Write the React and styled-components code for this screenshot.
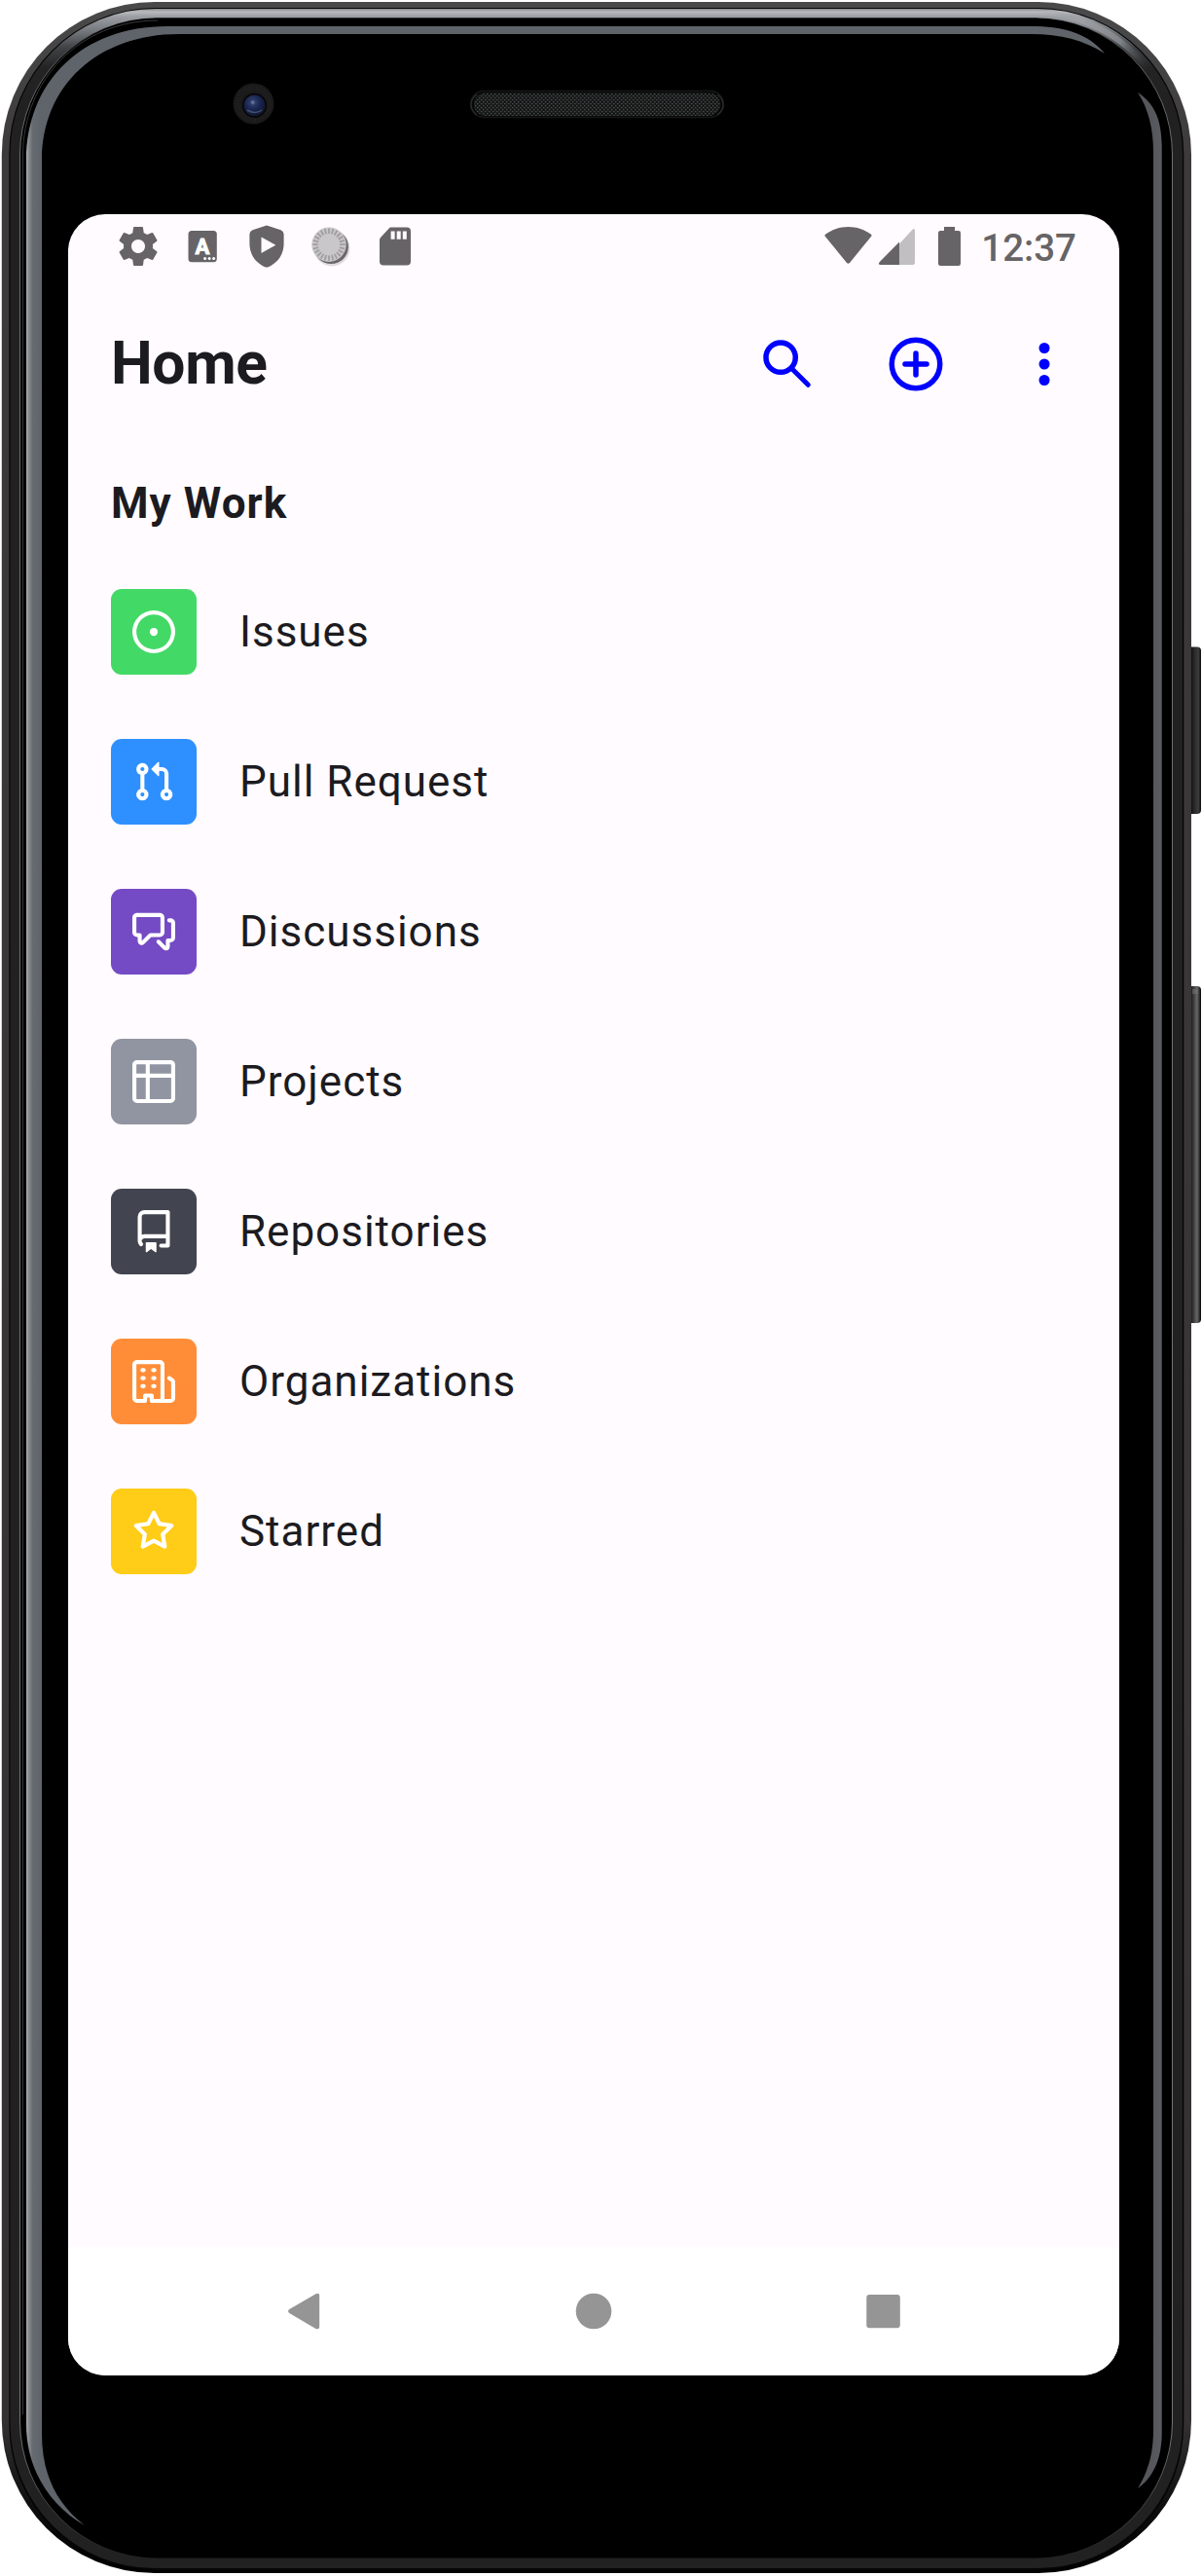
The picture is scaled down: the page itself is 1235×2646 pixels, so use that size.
import React from "react";
import styled, { createGlobalStyle } from "styled-components";

const GlobalStyle = createGlobalStyle`
  html, body { margin: 0; padding: 0; background: #ffffff; }
  * { box-sizing: border-box; }
`;

const Device = styled.div`
  position: relative;
  width: 1235px;
  height: 2646px;
  padding: 220px 85px 206px 70px;
  overflow: hidden;
  font-family: Roboto, "Liberation Sans", sans-serif;
`;

const Artwork = styled.svg`
  position: absolute;
  inset: 0;
  width: 1235px;
  height: 2646px;
`;

const Screen = styled.div`
  position: relative;
  display: flex;
  flex-direction: column;
  width: 1080px;
  height: 2220px;
  border-radius: 38px;
  overflow: hidden;
  background: #fffbff;
  color: #1c1b1f;
`;

const StatusBar = styled.div`
  display: flex;
  align-items: center;
  justify-content: space-between;
  height: 66px;
  padding: 0 44px 0 39px;
`;

const StatusGroup = styled.div`
  display: flex;
  align-items: center;
  height: 66px;
`;

const StatusIcon = styled.svg`
  display: block;
  width: ${(p) => p.$width || 66}px;
  height: 66px;
  fill: #666466;
`;

const Clock = styled.time`
  font-size: 38.5px;
  line-height: 66px;
  font-weight: 500;
  color: #666466;
  padding-top: 4px;
`;

const AppBar = styled.header`
  display: flex;
  align-items: center;
  justify-content: space-between;
  height: 176px;
  padding: 0 44px;
`;

const Title = styled.h1`
  margin: 0 0 2px;
  font-size: 60.5px;
  line-height: 77px;
  font-weight: 700;
  letter-spacing: -0.35px;
`;

const Actions = styled.div`
  display: flex;
  gap: 66px;
`;

const ActionIcon = styled.svg`
  display: block;
  width: 66px;
  height: 66px;
  fill: none;
  stroke: #0000ff;
  stroke-width: 2;
  stroke-linecap: round;
`;

const Content = styled.main`
  flex: 1;
  padding: 22px 44px 0;
`;

const SectionTitle = styled.h2`
  margin: 0;
  font-size: 44px;
  line-height: 66px;
  font-weight: 700;
  letter-spacing: 1.05px;
`;

const WorkList = styled.ul`
  display: flex;
  flex-direction: column;
  gap: 66px;
  margin: 55px 0 0;
  padding: 0;
  list-style: none;
`;

const WorkItem = styled.li`
  display: flex;
  align-items: center;
  gap: 44px;
  height: 88px;
`;

const Tile = styled.span`
  display: flex;
  align-items: center;
  justify-content: center;
  width: 88px;
  height: 88px;
  border-radius: 11px;
  background: ${(p) => p.$color};
`;

const TileIcon = styled.svg`
  width: 44px;
  height: 44px;
  fill: #ffffff;
`;

const Label = styled.span`
  font-size: 44px;
  line-height: 66px;
  letter-spacing: 0.99px;
`;

const NavBar = styled.nav`
  display: flex;
  align-items: center;
  justify-content: center;
  gap: 232px;
  height: 132px;
  background: #ffffff;
`;

const NavIcon = styled.svg`
  width: 66px;
  height: 66px;
  fill: #959595;
`;

const items = [
  {
    label: "Issues",
    color: "#43d966",
    d: "M8 9.5a1.5 1.5 0 1 0 0-3 1.5 1.5 0 0 0 0 3ZM8 0a8 8 0 1 1 0 16A8 8 0 0 1 8 0ZM1.5 8a6.5 6.5 0 1 0 13 0 6.5 6.5 0 0 0-13 0Z",
  },
  {
    label: "Pull Request",
    color: "#2e90ff",
    d: "M1.5 3.25a2.25 2.25 0 1 1 3 2.122v5.256a2.251 2.251 0 1 1-1.5 0V5.372A2.25 2.25 0 0 1 1.5 3.25Zm5.677-.177L9.573.677A.25.25 0 0 1 10 .854V2.5h1A2.5 2.5 0 0 1 13.5 5v5.628a2.251 2.251 0 1 1-1.5 0V5a1 1 0 0 0-1-1h-1v1.646a.25.25 0 0 1-.427.177L7.177 3.427a.25.25 0 0 1 0-.354ZM3.75 2.5a.75.75 0 1 0 0 1.5.75.75 0 0 0 0-1.5Zm0 9.5a.75.75 0 1 0 0 1.5.75.75 0 0 0 0-1.5Zm8.25.75a.75.75 0 1 0 1.5 0 .75.75 0 0 0-1.5 0Z",
  },
  {
    label: "Discussions",
    color: "#754ac5",
    d: "M1.75 1h8.5c.966 0 1.75.784 1.75 1.75v5.5A1.75 1.75 0 0 1 10.25 10H7.061l-2.574 2.573A1.458 1.458 0 0 1 2 11.543V10h-.25A1.75 1.75 0 0 1 0 8.25v-5.5C0 1.784.784 1 1.75 1ZM1.5 2.75v5.5c0 .138.112.25.25.25h1a.75.75 0 0 1 .75.75v2.19l2.72-2.72a.749.749 0 0 1 .53-.22h3.5a.25.25 0 0 0 .25-.25v-5.5a.25.25 0 0 0-.25-.25h-8.5a.25.25 0 0 0-.25.25Zm13 2a.25.25 0 0 0-.25-.25h-.5a.75.75 0 0 1 0-1.5h.5c.966 0 1.75.784 1.75 1.75v5.5A1.75 1.75 0 0 1 14.25 12H14v1.543a1.458 1.458 0 0 1-2.487 1.03L9.22 12.28a.749.749 0 0 1 .326-1.275.749.749 0 0 1 .734.215l2.22 2.22v-2.19a.75.75 0 0 1 .75-.75h1a.25.25 0 0 0 .25-.25Z",
  },
  {
    label: "Projects",
    color: "#9195a1",
    d: "M0 1.75C0 .784.784 0 1.75 0h12.5C15.216 0 16 .784 16 1.75v12.5A1.75 1.75 0 0 1 14.25 16H1.75A1.75 1.75 0 0 1 0 14.25ZM6.5 6.5v8h7.75a.25.25 0 0 0 .25-.25V6.5Zm8-1.5V1.75a.25.25 0 0 0-.25-.25H6.5V5Zm-13 1.5v7.75c0 .138.112.25.25.25H5v-8ZM5 5V1.5H1.75a.25.25 0 0 0-.25.25V5Z",
  },
  {
    label: "Repositories",
    color: "#42444f",
    d: "M2 2.5A2.5 2.5 0 0 1 4.5 0h8.75a.75.75 0 0 1 .75.75v12.5a.75.75 0 0 1-.75.75h-2.5a.75.75 0 0 1 0-1.5h1.75v-2h-8a1 1 0 0 0-.714 1.7.75.75 0 1 1-1.072 1.05A2.495 2.495 0 0 1 2 11.5Zm10.5-1h-8a1 1 0 0 0-1 1v6.708A2.486 2.486 0 0 1 4.5 9h8ZM5 12.25a.25.25 0 0 1 .25-.25h3.5a.25.25 0 0 1 .25.25v3.25a.25.25 0 0 1-.4.2l-1.45-1.087a.249.249 0 0 0-.3 0L5.4 15.7a.25.25 0 0 1-.4-.2Z",
  },
  {
    label: "Organizations",
    color: "#ff8d38",
    d: "M1.75 16A1.75 1.75 0 0 1 0 14.25V1.75C0 .784.784 0 1.75 0h8.5C11.216 0 12 .784 12 1.75v12.5c0 .085-.006.168-.018.25h2.268a.25.25 0 0 0 .25-.25V8.285a.25.25 0 0 0-.111-.208l-1.055-.703a.749.749 0 1 1 .832-1.248l1.055.703c.487.325.779.871.779 1.456v5.965A1.75 1.75 0 0 1 14.25 16h-3.5a.766.766 0 0 1-.197-.026c-.099.017-.2.026-.303.026h-3a.75.75 0 0 1-.75-.75V14h-1v1.25a.75.75 0 0 1-.75.75Zm-.25-1.75c0 .138.112.25.25.25H4v-1.25a.75.75 0 0 1 .75-.75h2.5a.75.75 0 0 1 .75.75v1.25h2.25a.25.25 0 0 0 .25-.25V1.75a.25.25 0 0 0-.25-.25h-8.5a.25.25 0 0 0-.25.25ZM3.75 6h.5a.75.75 0 0 1 0 1.5h-.5a.75.75 0 0 1 0-1.5ZM3 3.75A.75.75 0 0 1 3.75 3h.5a.75.75 0 0 1 0 1.5h-.5A.75.75 0 0 1 3 3.75Zm4 3A.75.75 0 0 1 7.75 6h.5a.75.75 0 0 1 0 1.5h-.5A.75.75 0 0 1 7 6.75ZM7.75 3h.5a.75.75 0 0 1 0 1.5h-.5a.75.75 0 0 1 0-1.5ZM3 9.75A.75.75 0 0 1 3.75 9h.5a.75.75 0 0 1 0 1.5h-.5A.75.75 0 0 1 3 9.75ZM7.75 9h.5a.75.75 0 0 1 0 1.5h-.5a.75.75 0 0 1 0-1.5Z",
  },
  {
    label: "Starred",
    color: "#ffcc17",
    d: "M8 .25a.75.75 0 0 1 .673.418l1.882 3.815 4.21.612a.75.75 0 0 1 .416 1.279l-3.046 2.97.719 4.192a.751.751 0 0 1-1.088.791L8 12.347l-3.766 1.98a.75.75 0 0 1-1.088-.79l.72-4.194L.818 6.374a.75.75 0 0 1 .416-1.28l4.21-.611L7.327.668A.75.75 0 0 1 8 .25Zm0 2.445L6.615 5.5a.75.75 0 0 1-.564.41l-3.097.45 2.24 2.184a.75.75 0 0 1 .216.664l-.528 3.084 2.769-1.456a.75.75 0 0 1 .698 0l2.77 1.456-.53-3.084a.75.75 0 0 1 .216-.664l2.24-2.183-3.096-.45a.75.75 0 0 1-.564-.41L8 2.694Z",
  },
];

const gearPath =
  "M19.43 12.98c.04-.32.07-.64.07-.98s-.03-.66-.07-.98l2.11-1.65c.19-.15.24-.42.12-.64l-2-3.46c-.12-.22-.39-.3-.61-.22l-2.49 1c-.52-.4-1.08-.73-1.69-.98l-.38-2.65C14.46 2.18 14.25 2 14 2h-4c-.25 0-.46.18-.49.42l-.38 2.65c-.61.25-1.17.59-1.69.98l-2.49-1c-.23-.09-.49 0-.61.22l-2 3.46c-.13.22-.07.49.12.64l2.11 1.65c-.04.32-.07.65-.07.98s.03.66.07.98l-2.11 1.65c-.19.15-.24.42-.12.64l2 3.46c.12.22.39.3.61.22l2.49-1c.52.4 1.08.73 1.69.98l.38 2.65c.03.24.24.42.49.42h4c.25 0 .46-.18.49-.42l.38-2.65c.61-.25 1.17-.59 1.69-.98l2.49 1c.23.09.49 0 .61-.22l2-3.46c.12-.22.07-.49-.12-.64l-2.11-1.65zM12 15.5c-1.93 0-3.5-1.57-3.5-3.5s1.57-3.5 3.5-3.5 3.5 1.57 3.5 3.5-1.57 3.5-3.5 3.5z";

function DeviceArtwork() {
  return (
    <Artwork viewBox="0 0 1235 2646" aria-hidden="true">
      <defs>
        <linearGradient id="shell" gradientUnits="userSpaceOnUse" x1="0" y1="0" x2="0" y2="2646">
          <stop offset="0" stopColor="#4a4a4a" />
          <stop offset="0.06" stopColor="#3d3a3b" />
          <stop offset="0.94" stopColor="#343132" />
          <stop offset="0.975" stopColor="#0c0c0c" />
          <stop offset="1" stopColor="#000000" />
        </linearGradient>
        <linearGradient id="rim" gradientUnits="userSpaceOnUse" x1="0" y1="9" x2="0" y2="109">
          <stop offset="0" stopColor="#85888b" />
          <stop offset="0.03" stopColor="#b9bbbe" />
          <stop offset="0.08" stopColor="#9b9ea3" />
          <stop offset="0.22" stopColor="#777a7f" />
          <stop offset="0.4" stopColor="#404346" />
          <stop offset="0.6" stopColor="#242424" />
          <stop offset="1" stopColor="#212121" />
        </linearGradient>
        <linearGradient id="cornerShine" gradientUnits="userSpaceOnUse" x1="1065" y1="0" x2="1180" y2="0">
          <stop offset="0" stopColor="#a9acb0" stopOpacity="0" />
          <stop offset="0.4" stopColor="#a0a3a7" stopOpacity="0.8" />
          <stop offset="0.75" stopColor="#8a8d92" stopOpacity="0.8" />
          <stop offset="1" stopColor="#3a3b3d" stopOpacity="0" />
        </linearGradient>
        <linearGradient id="hairline" gradientUnits="userSpaceOnUse" x1="0" y1="18" x2="0" y2="2630">
          <stop offset="0" stopColor="#222222" />
          <stop offset="0.02" stopColor="#6c6e70" />
          <stop offset="0.95" stopColor="#757575" />
          <stop offset="0.985" stopColor="#444444" />
          <stop offset="1" stopColor="#1c1c1c" />
        </linearGradient>
        <linearGradient id="glassLeft" gradientUnits="userSpaceOnUse" x1="27" y1="0" x2="43" y2="0">
          <stop offset="0" stopColor="#a9adad" />
          <stop offset="0.15" stopColor="#8b8f92" />
          <stop offset="0.4" stopColor="#666b72" />
          <stop offset="1" stopColor="#5f636a" />
        </linearGradient>
        <linearGradient id="glassRight" gradientUnits="userSpaceOnUse" x1="1185" y1="0" x2="1194" y2="0">
          <stop offset="0" stopColor="#55575c" />
          <stop offset="0.85" stopColor="#595b61" />
          <stop offset="1" stopColor="#77797d" />
        </linearGradient>
        <linearGradient id="key" gradientUnits="userSpaceOnUse" x1="1223" y1="0" x2="1234" y2="0">
          <stop offset="0" stopColor="#080808" />
          <stop offset="0.3" stopColor="#252525" />
          <stop offset="0.75" stopColor="#3c3c3c" />
          <stop offset="1" stopColor="#0b0b0b" />
        </linearGradient>
        <linearGradient id="rocker" gradientUnits="userSpaceOnUse" x1="1222" y1="0" x2="1234" y2="0">
          <stop offset="0" stopColor="#080808" />
          <stop offset="0.3" stopColor="#333333" />
          <stop offset="0.65" stopColor="#676767" />
          <stop offset="0.85" stopColor="#333333" />
          <stop offset="1" stopColor="#000000" />
        </linearGradient>
        <radialGradient id="lens" cx="0.42" cy="0.35" r="0.65">
          <stop offset="0" stopColor="#7886ac" />
          <stop offset="0.2" stopColor="#2c3a69" />
          <stop offset="0.6" stopColor="#17224b" />
          <stop offset="1" stopColor="#11172c" />
        </radialGradient>
        <pattern id="mesh" width="4" height="4" patternUnits="userSpaceOnUse">
          <rect width="4" height="4" fill="#191b1b" />
          <rect width="1.4" height="1.2" fill="#484b4b" />
          <rect x="2" y="2" width="1.4" height="1.2" fill="#484b4b" />
          <rect x="2" y="0" width="1" height="1" fill="#090909" />
        </pattern>
      </defs>

      <rect x="1219" y="664.5" width="15" height="171.5" rx="4" fill="url(#key)" />
      <rect x="1219" y="1013" width="15" height="346" rx="4" fill="url(#rocker)" />
      <path d="M1225 1016h6v5h-6z" fill="#777777" opacity="0.5" />

      <rect x="1.8" y="2" width="1222.2" height="2641" rx="157" fill="url(#shell)" />
      <rect x="9.3" y="8" width="1207" height="2632" rx="150" fill="#050505" />
      <rect x="10.5" y="9" width="1204.5" height="2629" rx="149" fill="url(#rim)" />
      <path d="M1066 13.6A144 144 0 0 1 1180 72" fill="none" stroke="url(#cornerShine)" strokeWidth="6" />
      <rect x="20" y="18.3" width="1185" height="2609.7" rx="141" fill="url(#hairline)" />
      <rect x="21" y="18.8" width="1183" height="2608.6" rx="140" fill="#000000" />
      <path d="M23.5 2480V160C23.5 82 82 21 162 21" fill="none" stroke="#3c3e40" strokeWidth="0.9" />

      <path
        d="M27 2490V165C27 84 84 27 172 27H1060C1090 27 1117 33 1135 55C1113 41 1090 35 1060 35H184C100 35 43 88 43 165V2500C43 2540 57 2571 87 2594C50 2573 27 2535 27 2490Z"
        fill="url(#glassLeft)"
      />
      <path
        d="M1169 95C1187 107 1193.6 124 1193.6 150V2500C1193.6 2524 1186 2544 1169 2556C1180 2538 1185 2520 1185 2496V156C1185 132 1180 112 1169 95Z"
        fill="url(#glassRight)"
      />

      <circle cx="260.5" cy="106.5" r="21" fill="#191919" />
      <circle cx="260.5" cy="106.5" r="16" fill="none" stroke="#232323" strokeWidth="6" strokeDasharray="1 1.5" />
      <circle cx="261.5" cy="108.5" r="12.5" fill="#050505" />
      <circle cx="261.5" cy="108.5" r="11" fill="url(#lens)" />
      <path d="M254 113q8 5 15 0" fill="none" stroke="#3f5273" strokeWidth="1.5" />

      <rect x="483.5" y="93.5" width="260" height="27" rx="13.5" fill="#070707" stroke="#161717" strokeWidth="1.4" />
      <path d="M490 97C482 103 482 112 490 118M737 97C745 103 745 112 737 118" fill="none" stroke="#2c2e2e" strokeWidth="1.2" />
      <rect x="487" y="95.5" width="253" height="23.5" rx="11.7" fill="url(#mesh)" />
    </Artwork>
  );
}

function Notifications() {
  const ticks = Array.from({ length: 24 }, (_, i) => i * 15);
  return (
    <StatusGroup>
      <StatusIcon viewBox="0 0 66 66">
        <path transform="translate(9 9)scale(2)" d={gearPath} />
      </StatusIcon>
      <StatusIcon viewBox="0 0 66 66">
        <rect x="18.5" y="17" width="29.3" height="32.3" rx="3.5" />
        <text x="33" y="40.5" textAnchor="middle" fontFamily="Roboto" fontWeight="700" fontSize="22" fill="#ffffff" stroke="#ffffff" strokeWidth="0.9">A</text>
        <circle cx="35.6" cy="45.5" r="1.5" fill="#fff" />
        <circle cx="40.1" cy="45.5" r="1.5" fill="#fff" />
        <circle cx="44.6" cy="45.5" r="1.5" fill="#fff" />
      </StatusIcon>
      <StatusIcon viewBox="0 0 66 66">
        <path d="M33 11.4 47.5 16.3Q50.5 17.6 50.6 20.5V30C50.6 42 44 50 34.8 54.2Q33 55 31.2 54.2C22 50 15.4 42 15.4 30V20.5Q15.5 17.6 18.5 16.3ZM27.5 23.5V40L42.3 31.7Z" fillRule="evenodd" />
      </StatusIcon>
      <StatusIcon viewBox="0 0 66 66">
        <circle cx="34" cy="35" r="18.5" fill="#c9c6c9" opacity="0.6" />
        <circle cx="33.2" cy="33.4" r="17.7" fill="#69676a" />
        <circle cx="31" cy="31.2" r="17.7" fill="#c9c7c9" />
        {ticks.map((a) => (
          <path key={a} d="M31 14.5v5.5" transform={`rotate(${a} 31 31.2)`} stroke="#a09ea0" strokeWidth="1.8" />
        ))}
      </StatusIcon>
      <StatusIcon viewBox="0 0 66 66">
        <path d="M28.5 13.4H45Q49 13.4 49 17.4V48.5Q49 52.5 45 52.5H21Q17 52.5 17 48.5V26.5Q17 25 18.2 23.8L26.8 14.4Q27.5 13.4 28.5 13.4ZM28.6 17.5V25.7H32.6V17.5ZM34.7 17.5V25.7H38.7V17.5ZM40.8 17.5V25.7H44.8V17.5Z" fillRule="evenodd" />
      </StatusIcon>
    </StatusGroup>
  );
}

function SystemStatus() {
  return (
    <StatusGroup>
      <StatusIcon $width={49} viewBox="0 0 49 66">
        <path d="M24.5 13C33 13 41 15.7 48 20.7Q49 21.5 48.2 22.7L26 50Q24.5 51.5 23 50L.8 22.7Q0 21.5 1 20.7C8 15.7 16 13 24.5 13Z" />
      </StatusIcon>
      <StatusIcon $width={67} viewBox="0 0 67 66">
        <path d="M28 30.5 40 17.5Q44 13 44 17V50Q44 52 42 52H28Z" fill="#c1bfc1" />
        <path d="M28 28.5V52H9Q5.5 52 7.8 49Z" />
      </StatusIcon>
      <StatusIcon $width={45} viewBox="0 0 45 66">
        <path d="M7 13H18V17H21.7Q24 17 24 19.3V50.7Q24 53 21.7 53H3.3Q1 53 1 50.7V19.3Q1 17 3.3 17H7Z" />
      </StatusIcon>
      <Clock>12:37</Clock>
    </StatusGroup>
  );
}

export default function App() {
  return (
    <>
      <GlobalStyle />
      <Device>
        <DeviceArtwork />
        <Screen>
          <StatusBar>
            <Notifications />
            <SystemStatus />
          </StatusBar>
          <AppBar>
            <Title>Home</Title>
            <Actions>
              <ActionIcon viewBox="0 0 24 24" role="img" aria-label="Search">
                <circle cx="9.5" cy="9.5" r="5.5" />
                <path d="M13.7 13.7 19.75 19.75" strokeWidth="1.8" />
              </ActionIcon>
              <ActionIcon viewBox="0 0 24 24" role="img" aria-label="Add">
                <circle cx="12" cy="12" r="9" />
                <path d="M12 8v8M8 12h8" />
              </ActionIcon>
              <ActionIcon viewBox="0 0 24 24" role="img" aria-label="More">
                <g fill="#0000ff" stroke="none">
                  <circle cx="12" cy="6" r="2" />
                  <circle cx="12" cy="12" r="2" />
                  <circle cx="12" cy="18" r="2" />
                </g>
              </ActionIcon>
            </Actions>
          </AppBar>
          <Content>
            <SectionTitle>My Work</SectionTitle>
            <WorkList>
              {items.map((item) => (
                <WorkItem key={item.label}>
                  <Tile $color={item.color}>
                    <TileIcon viewBox="0 0 16 16">
                      <path d={item.d} />
                    </TileIcon>
                  </Tile>
                  <Label>{item.label}</Label>
                </WorkItem>
              ))}
            </WorkList>
          </Content>
          <NavBar>
            <NavIcon viewBox="0 0 66 66">
              <path d="M18.3 31 45 15.5Q49.2 13.5 49.2 17V49Q49.2 52.5 45 50.7L18.3 35Q15.8 33 18.3 31Z" />
            </NavIcon>
            <NavIcon viewBox="0 0 66 66">
              <circle cx="33" cy="33" r="18.3" />
            </NavIcon>
            <NavIcon viewBox="0 0 66 66">
              <rect x="15.3" y="16" width="34.5" height="34.3" rx="3" />
            </NavIcon>
          </NavBar>
        </Screen>
      </Device>
    </>
  );
}
